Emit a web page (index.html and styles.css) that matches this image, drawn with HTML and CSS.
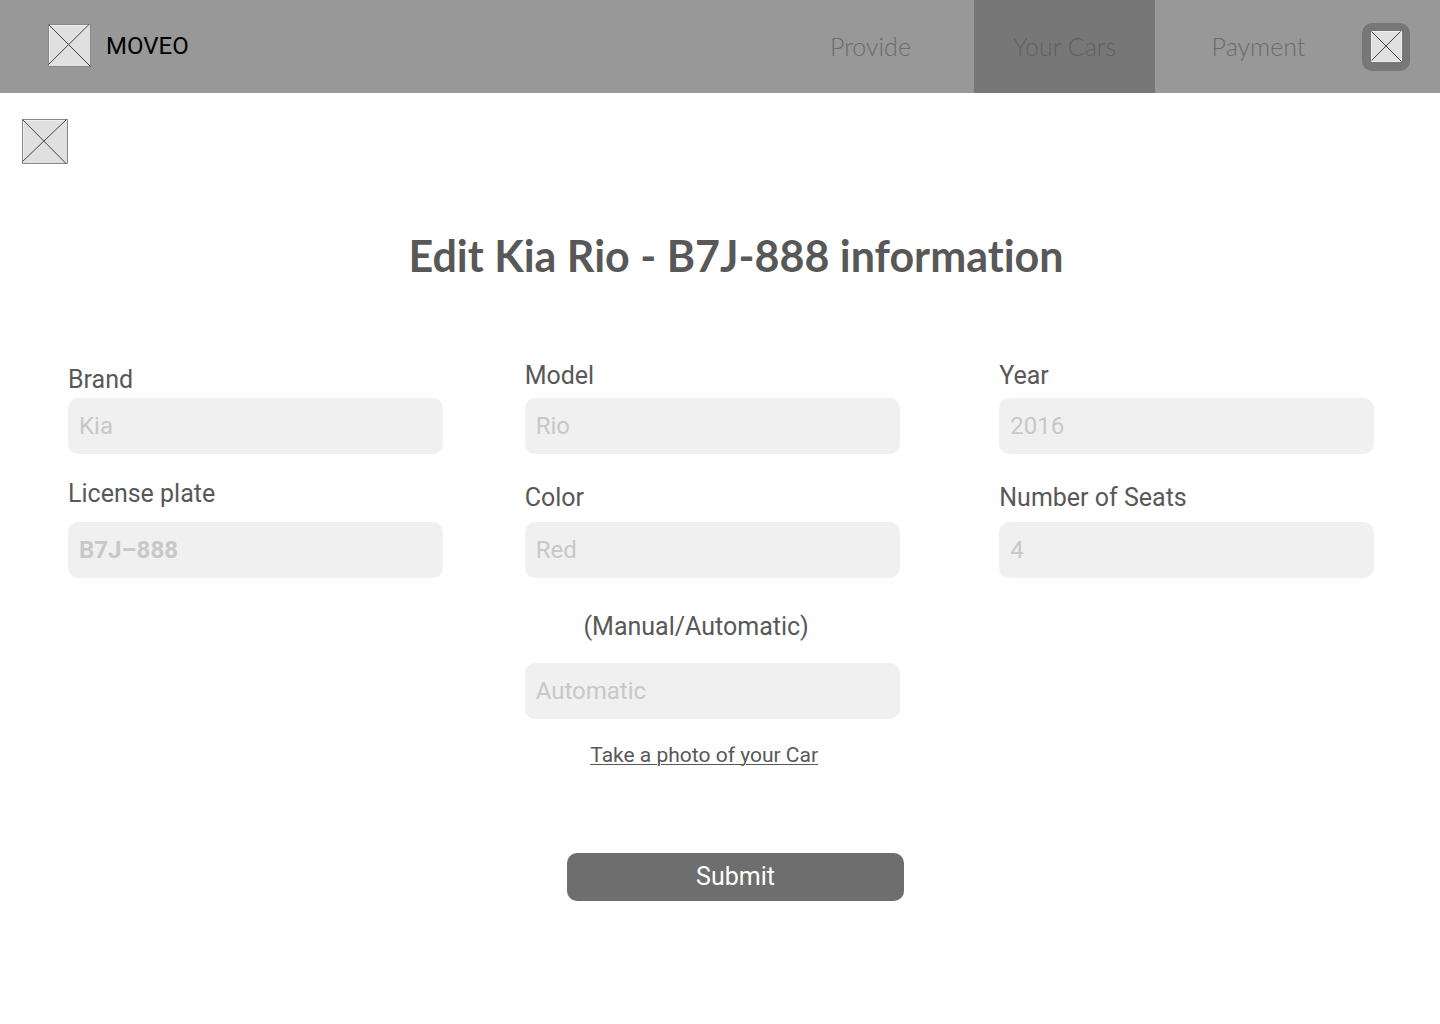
FILE: index.html
```html
<!DOCTYPE html>
<html lang="en">
<head>
<meta charset="utf-8">
<meta name="viewport" content="width=device-width, initial-scale=1">
<title>Moveo - Edit car</title>
<link rel="stylesheet" href="styles.css">
</head>
<body>
<header class="topbar">
  <a class="brand" href="#">
    <svg class="box box-logo" viewBox="0 0 43 43" aria-hidden="true"><path class="fill" d="M.5.5h42v42H.5z"/><path class="shine" d="M1.500 41V1.500H41"/><path class="cross" d="M.5.500l42 42M.5 40.500L41 .5"/></svg>
    <span>MOVEO</span>
  </a>
  <nav class="nav">
    <a class="nav-link nav-provide" href="#">Provide</a>
    <a class="nav-link nav-cars" href="#" aria-current="page">Your Cars</a>
    <a class="nav-link nav-payment" href="#">Payment</a>
  </nav>
  <button class="profile" type="button" aria-label="Profile">
    <svg class="box box-profile" viewBox="0 0 31 31" aria-hidden="true"><path class="fill light" d="M.5.5h30v30H.5z"/><path class="cross" d="M.5.5l30 30M.5 29.500L29.500 .5"/></svg>
  </button>
</header>
<main>
  <button class="back" type="button" aria-label="Back">
    <svg class="box box-back" viewBox="0 0 46 45" aria-hidden="true"><path class="fill" d="M.5.5h45v44H.5z"/><path class="shine" d="M1.500 43V1.500H44"/><path class="cross" d="M.5.500l43.500 44M.5 42.500L44.500 .5"/></svg>
  </button>
  <h1 class="title">Edit Kia Rio - B7J-888 information</h1>
  <form class="form">
    <div class="fields">
      <div class="field gap-xs"><label for="brand">Brand</label><input id="brand" type="text" placeholder="Kia"></div>
      <div class="field gap-s"><label for="model">Model</label><input id="model" type="text" placeholder="Rio"></div>
      <div class="field gap-s"><label for="year">Year</label><input id="year" type="text" placeholder="2016"></div>
      <div class="field gap-l"><label for="plate">License plate</label><input id="plate" class="strong" type="text" placeholder="B7J–888"></div>
      <div class="field gap-m"><label for="color">Color</label><input id="color" type="text" placeholder="Red"></div>
      <div class="field gap-m"><label for="seats">Number of Seats</label><input id="seats" type="text" placeholder="4"></div>
      <div class="field transmission"><label for="transmission">(Manual/Automatic)</label><input id="transmission" type="text" placeholder="Automatic"><a class="photo" href="#">Take a photo of your Car</a></div>
    </div>
    <div class="actions"><button class="submit" type="submit">Submit</button></div>
  </form>
</main>
</body>
</html>
```
FILE: styles.css
```css
* { box-sizing: border-box; }
body {
  margin: 0;
  background: #fff;
  color: #585858;
  font-family: Roboto, "Liberation Sans", sans-serif;
  font-size: 25px;
  line-height: 32px;
}
button, input { font: inherit; }
button { border: 0; padding: 0; cursor: pointer; }

.topbar {
  display: flex;
  align-items: center;
  min-height: 93px;
  padding: 0 30px 0 48px;
  background: #989898;
}
.brand {
  display: flex;
  align-items: center;
  gap: 15px;
  padding-bottom: 2px;
  color: #000;
  font-size: 24px;
  text-decoration: none;
}
.nav {
  display: flex;
  align-self: stretch;
  margin-left: auto;
}
.nav-link {
  display: flex;
  align-items: center;
  justify-content: center;
  padding-bottom: 2px;
  color: #6c6c6c;
  font-family: Lato, sans-serif;
  font-weight: 300;
  text-decoration: none;
}
.nav-provide { width: 207px; }
.nav-cars { width: 181px; background: #777; color: #616161; }
.nav-payment { width: 207px; }
.profile {
  display: grid;
  place-items: center;
  width: 48px;
  height: 48px;
  border-radius: 10px;
  background: #777;
}

.box { display: block; flex: none; }
.box-logo { width: 43px; height: 43px; }
.box-profile { width: 31px; height: 31px; }
.box-back { width: 46px; height: 45px; }
.fill { fill: #e0e0e0; stroke: #888; }
.fill.light { stroke: #eee; }
.shine { fill: none; stroke: #f0f0f0; }
.cross { fill: none; stroke: #444; }

.back { display: block; margin: 26px 0 0 22px; background: none; }
.title {
  margin: 68px 0 0;
  padding: 0 16px 0 48px;
  font-family: Lato, sans-serif;
  font-size: 43px;
  font-weight: 700;
  font-variant-ligatures: none;
  line-height: 48px;
  text-align: center;
}
.form { padding: 80px 66px 48px 68px; }
.fields {
  display: grid;
  grid-template-columns: 457fr 475fr 375fr;
  row-gap: 24px;
  align-items: end;
}
.field {
  display: flex;
  flex-direction: column;
  max-width: 375px;
}
.field input {
  width: 100%;
  height: 56px;
  padding: 0 11px;
  border: 0;
  border-radius: 10px;
  background: #f0f0f0;
  color: #585858;
  font-size: 24px;
}
.field input::placeholder { color: #c8c8c8; opacity: 1; }
.field .strong { font-weight: 700; }
.gap-xs { gap: 2px; }
.gap-s { gap: 6px; }
.gap-m { gap: 8px; }
.gap-l { gap: 12px; }
.transmission {
  grid-column: 2;
  gap: 20px;
  padding-top: 9px;
}
.transmission label { padding-right: 32px; text-align: center; }
.photo {
  align-self: center;
  margin-right: 16px;
  color: inherit;
  font-size: 21px;
  text-decoration-thickness: 1px;
  text-underline-offset: 2px;
}
.actions {
  display: flex;
  justify-content: center;
  padding: 82px 0 0 29px;
}
.submit {
  width: 337px;
  height: 48px;
  border-radius: 10px;
  background: #6e6e6e;
  color: #fff;
}
```
